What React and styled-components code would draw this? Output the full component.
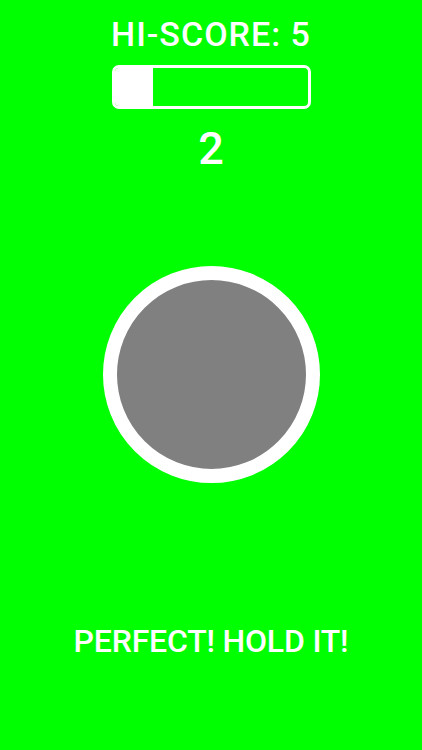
import styled, { createGlobalStyle } from 'styled-components';

const GlobalStyle = createGlobalStyle`
  html, body {
    margin: 0;
    padding: 0;
    background: #00ff00;
  }
  * {
    box-sizing: border-box;
  }
`;

const Screen = styled.div`
  width: 422px;
  height: 750px;
  background: #00ff00;
  color: #fff;
  font-family: Roboto, 'DejaVu Sans Condensed', sans-serif;
  font-weight: 500;
  display: flex;
  flex-direction: column;
  align-items: center;
  overflow: hidden;
`;

const HiScore = styled.div`
  margin-top: 15px;
  font-size: 34px;
  line-height: 38px;
  letter-spacing: 1px;
`;

const Bar = styled.div`
  margin-top: 12px;
  width: 199px;
  height: 44px;
  border: 3px solid #fff;
  border-radius: 7px;
  overflow: hidden;
`;

const Fill = styled.div`
  height: 100%;
  background: #fff;
`;

const Score = styled.div`
  margin-top: 15px;
  font-size: 45px;
  line-height: 50px;
`;

const Ring = styled.div`
  margin-top: 92px;
  width: 217px;
  height: 217px;
  border-radius: 50%;
  border: 14.5px solid #fff;
  background: #808080;
`;

const Message = styled.div`
  margin-top: 139px;
  font-size: 32px;
  line-height: 38px;
  letter-spacing: -0.2px;
`;

export default function App() {
  const progress = 0.2;
  return (
    <>
      <GlobalStyle />
      <Screen>
        <HiScore>HI-SCORE: 5</HiScore>
        <Bar>
          <Fill style={{ width: `${progress * 100}%` }} />
        </Bar>
        <Score>2</Score>
        <Ring />
        <Message>PERFECT! HOLD IT!</Message>
      </Screen>
    </>
  );
}
